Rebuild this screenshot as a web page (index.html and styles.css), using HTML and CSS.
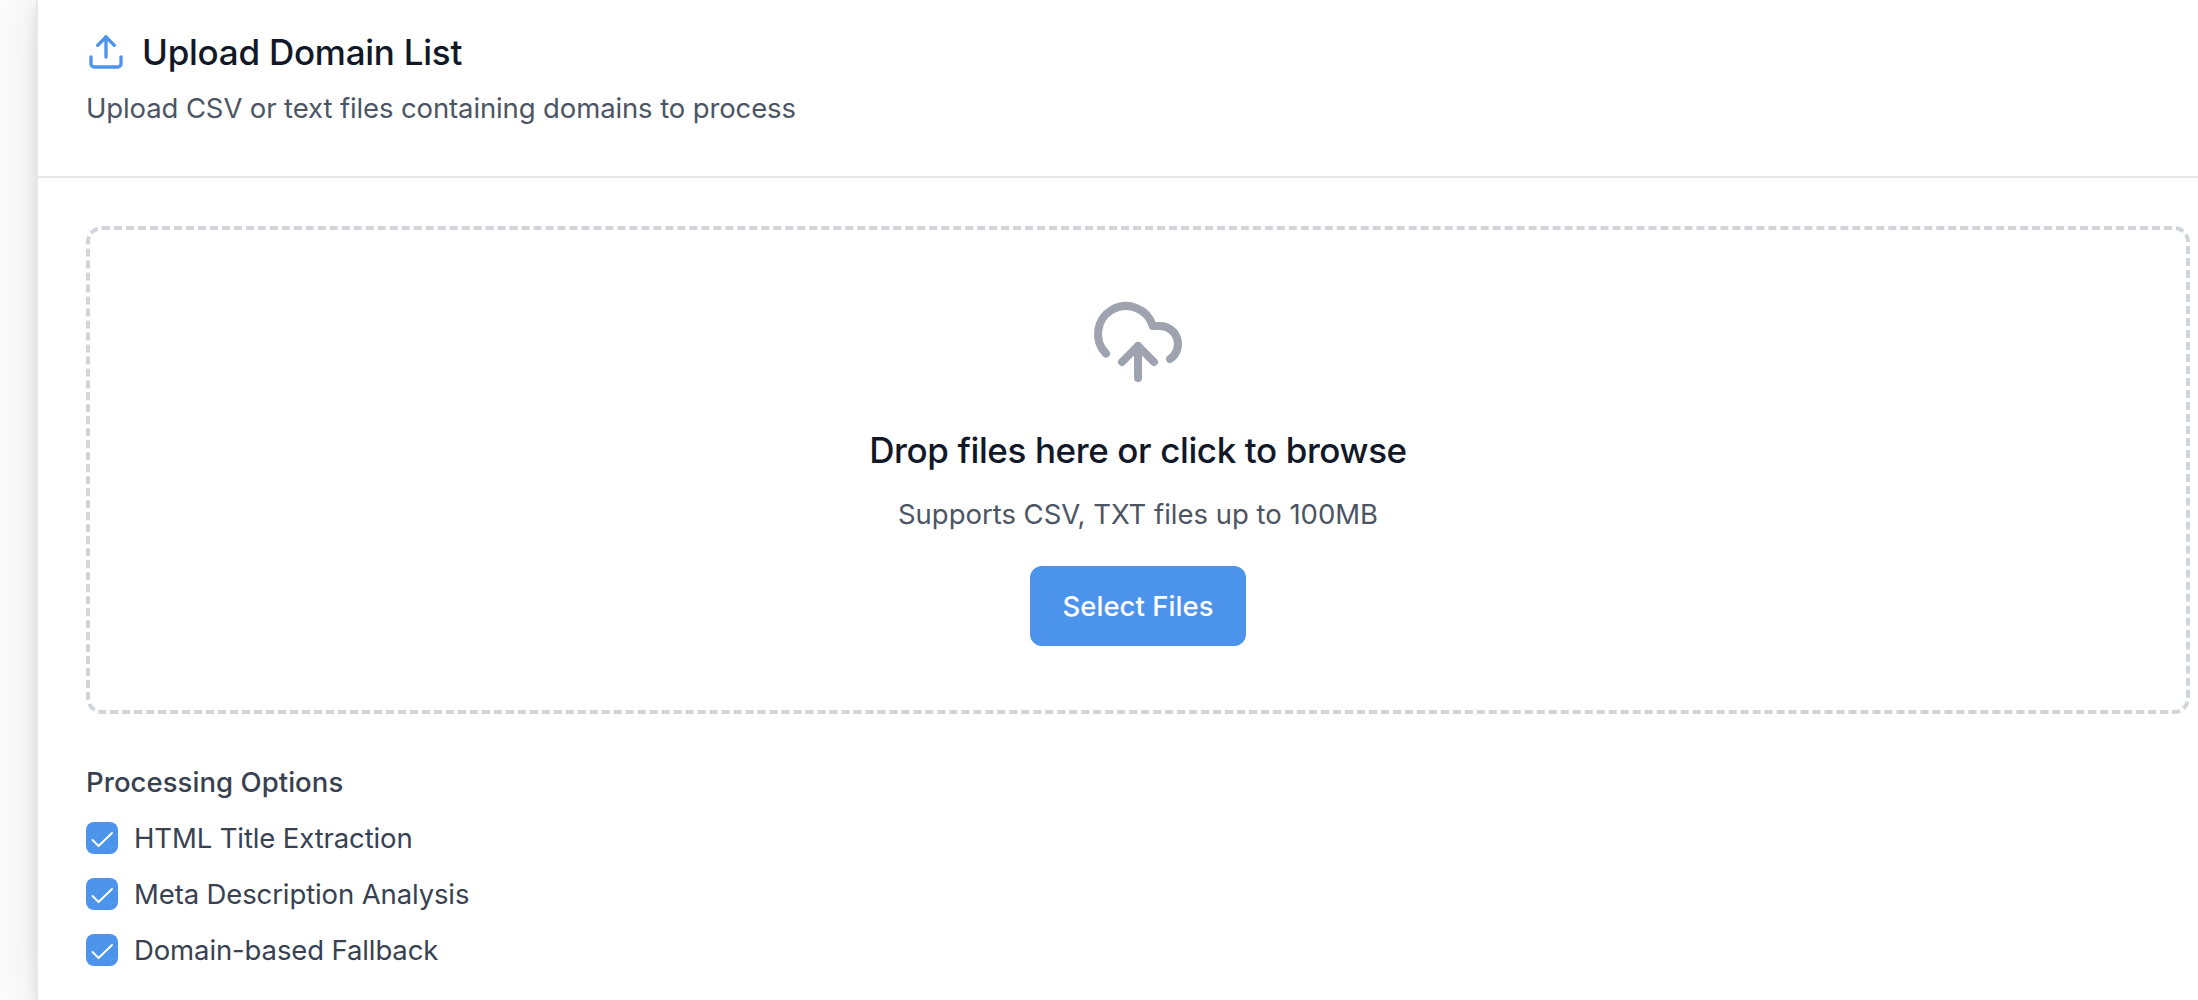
FILE: index.html
```html
<!DOCTYPE html>
<html lang="en">
<head>
<meta charset="utf-8">
<title>Upload Domain List</title>
<link rel="stylesheet" href="styles.css">
</head>
<body>
<main class="card">
  <header class="card-header">
    <div class="card-title-row">
      <svg class="title-icon" viewBox="0 0 24 24"><path d="M12 3v12"/><path d="m17 8-5-5-5 5"/><path d="M21 15v4a2 2 0 0 1-2 2H5a2 2 0 0 1-2-2v-4"/></svg>
      <h1 class="card-title">Upload Domain List</h1>
    </div>
    <p class="card-description">Upload CSV or text files containing domains to process</p>
  </header>
  <div class="card-body">
    <section class="dropzone">
      <svg class="cloud-icon" viewBox="0 0 24 24"><path d="M12 13v8"/><path d="M4 14.899A7 7 0 1 1 15.71 8h1.79a4.5 4.5 0 0 1 2.5 8.242"/><path d="m8 17 4-4 4 4"/></svg>
      <h2 class="dropzone-title">Drop files here or click to browse</h2>
      <p class="dropzone-hint">Supports CSV, TXT files up to 100MB</p>
      <button class="select-button" type="button">Select Files</button>
    </section>
    <section class="options">
      <h3 class="options-title">Processing Options</h3>
      <label class="option"><svg class="check" viewBox="0 0 32 32"><path d="m6.5 18 6 6L26 11"/></svg><span>HTML Title Extraction</span></label>
      <label class="option"><svg class="check" viewBox="0 0 32 32"><path d="m6.5 18 6 6L26 11"/></svg><span>Meta Description Analysis</span></label>
      <label class="option"><svg class="check" viewBox="0 0 32 32"><path d="m6.5 18 6 6L26 11"/></svg><span>Domain-based Fallback</span></label>
    </section>
  </div>
</main>
</body>
</html>
```
FILE: styles.css
```css
* { box-sizing: border-box; margin: 0; padding: 0; }
body {
  height: 1000px;
  padding-left: 36px;
  overflow: hidden;
  background: #fcfcfc;
  color: #111827;
  font-family: Inter, "Liberation Sans", sans-serif;
}
svg { display: block; flex: none; fill: none; stroke: currentColor; stroke-width: 2; stroke-linecap: round; stroke-linejoin: round; }
.card {
  height: 1000px;
  width: 2204px;
  border-left: 2px solid #e5e7eb;
  background: #fff;
  box-shadow: 0 8px 12px rgba(0, 0, 0, 0.1), 0 0 50px rgba(0, 0, 0, 0.09);
}
.card-header { padding: 24px 48px 48px; border-bottom: 2px solid #e5e7eb; }
.card-title-row { display: flex; align-items: center; gap: 16px; height: 56px; margin-bottom: 8px; }
.title-icon { width: 40px; height: 40px; color: #4c93ec; }
.card-title, .dropzone-title { font-size: 35px; font-weight: 500; line-height: 56px; }
.card-title { letter-spacing: -0.25px; }
.card-description, .dropzone-hint { font-size: 27.5px; line-height: 40px; color: #4b5563; }
.card-description { letter-spacing: -0.12px; }
.card-body { padding: 48px; }
.dropzone {
  display: flex;
  flex-direction: column;
  align-items: center;
  width: 2104px;
  padding: 64px;
  border: 4px dashed #d1d5db;
  border-radius: 16px;
}
.cloud-icon { width: 96px; height: 96px; margin-bottom: 32px; color: #9fa3af; }
.dropzone-title { margin-bottom: 16px; letter-spacing: -0.39px; }
.dropzone-hint { margin-bottom: 32px; letter-spacing: -0.02px; }
.select-button {
  width: 216px;
  height: 80px;
  border: 0;
  border-radius: 12px;
  background: #4c93ec;
  color: #fff;
  font: 500 27.5px/40px Inter, "Liberation Sans", sans-serif;
  letter-spacing: 0.05px;
}
.options { display: flex; flex-direction: column; gap: 16px; margin-top: 48px; color: #374151; }
.options-title { font-size: 27.5px; font-weight: 500; line-height: 40px; letter-spacing: 0.06px; }
.option { display: flex; align-items: center; gap: 16px; font-size: 27.5px; line-height: 40px; letter-spacing: -0.12px; }
.check { width: 32px; height: 32px; border-radius: 8px; background: #4c93ec; color: #fff; }
```
